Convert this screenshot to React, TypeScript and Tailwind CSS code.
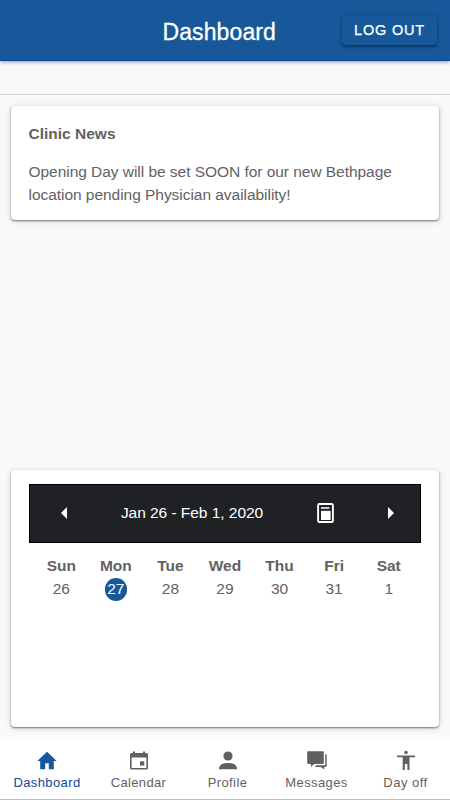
import React from 'react';

const days = [
  { name: 'Sun', date: 26 },
  { name: 'Mon', date: 27, today: true },
  { name: 'Tue', date: 28 },
  { name: 'Wed', date: 29 },
  { name: 'Thu', date: 30 },
  { name: 'Fri', date: 31 },
  { name: 'Sat', date: 1 },
];

const icons = {
  home: <path d="M10 .8.3 10h2.900v8.200h5v-6h3.600v6h5V10h2.900z" />,
  calendar: (
    <>
      <path fillRule="evenodd" d="M4 .5h2v1.500h8V.5h2V2h1.500A1.500 1.500 0 0 1 19 3.500v13.500a1.500 1.500 0 0 1-1.500 1.500h-15A1.500 1.500 0 0 1 1 17V3.500A1.500 1.500 0 0 1 2.500 2H4zM2.600 6.500v10.400h14.800V6.500z" />
      <path d="M11 10.300h4.300v4.300H11z" />
    </>
  ),
  person: (
    <>
      <circle cx="10" cy="5" r="4.600" />
      <path d="M1 18.200c0-4.700 4-6.200 9-6.200s9 1.500 9 6.200z" />
    </>
  ),
  messages: (
    <>
      <path d="M1 .3h15a.8.8 0 0 1 .8.8v11a.8.8 0 0 1-.8.8H7.200L3.900 16v-3.100H1a.8.8 0 0 1-.8-.8v-11A.8.8 0 0 1 1 .3z" />
      <path d="M18.200 3.300h.7a.8.8 0 0 1 .8.800v11a.8.800 0 0 1-.8.800h-1.700v2.500l-3.600-2.500H7.700l1.600-1.600h8.900z" />
    </>
  ),
  dayOff: (
    <>
      <circle cx="10" cy="1.500" r="1.800" />
      <path d="M1 4.500h18V6.300h-5.500V19H11.400v-6H8.800v6H6.700V6.300H1z" />
    </>
  ),
};

const tabs = [
  { label: 'Dashboard', icon: icons.home, width: 'w-[94px]', spacing: 'tracking-[0.4px]', active: true },
  { label: 'Calendar', icon: icons.calendar, width: 'w-[89px]', spacing: 'tracking-[0.35px]' },
  { label: 'Profile', icon: icons.person, width: 'w-[89px]', spacing: 'tracking-[0.4px]' },
  { label: 'Messages', icon: icons.messages, width: 'w-[89px]', spacing: 'tracking-[0.38px]' },
  { label: 'Day off', icon: icons.dayOff, width: 'w-[89px]', spacing: 'tracking-[0.5px]' },
];

const cardShadow = 'shadow-[0_1px_2px_rgba(0,0,0,0.5),0_1px_7px_rgba(0,0,0,0.14)]';

const App: React.FC = () => {
  return (
    <div className="flex flex-col w-[450px] h-[800px] overflow-hidden bg-[#f9f9f9] text-[#626262] font-['Liberation_Sans',Arial,sans-serif]">
      {/* App bar */}
      <header className="flex items-center justify-between shrink-0 h-[61px] pl-[162.5px] pr-[13px] bg-[#165899] border-b border-[#06479a] shadow-[0_1px_4px_rgba(0,0,0,0.4)]">
        <h1 className="pt-[4px] text-[23px] leading-7 tracking-[0.1px] whitespace-nowrap text-white [-webkit-text-stroke:0.3px_white]">Dashboard</h1>
        <button className="w-[95px] h-[30px] rounded bg-[#165899] text-[14.5px] leading-[30px] tracking-[0.8px] text-white shadow-[0_2px_3px_rgba(0,0,0,0.35),0_0_4px_rgba(0,0,0,0.12)] [-webkit-text-stroke:0.25px_white]">
          LOG OUT
        </button>
      </header>

      <div className="shrink-0 h-[34px] border-b border-[#d5d5d5]" />

      <main className="flex flex-col justify-between grow px-[11px] pt-[11px] pb-[12px]">
        {/* News */}
        <section className={`h-[114px] rounded bg-white pl-[17.5px] pt-[16px] ${cardShadow}`}>
          <h2 className="text-[15.5px] leading-[23px] font-bold">Clinic News</h2>
          <p className="mt-[15px] text-[15.5px] leading-[23px] tracking-[-0.04px] whitespace-nowrap">
            Opening Day will be set SOON for our new Bethpage
            <br />
            location pending Physician availability!
          </p>
        </section>

        {/* Week calendar */}
        <section className={`h-[257px] rounded bg-white pl-[17px] pr-[18px] pt-[14px] ${cardShadow}`}>
          <div className="flex items-center h-[59px] ml-px pb-[2px] border border-black bg-[#202124] text-white">
            <button className="w-[68px] flex justify-center" aria-label="Previous week">
              <svg className="w-[6px] h-[12px]" viewBox="0 0 6 12" fill="currentColor">
                <path d="M6 0v12L0 6z" />
              </svg>
            </button>
            <span className="w-[188px] text-center text-[15.5px] leading-5 tracking-[-0.04px]">Jan 26 - Feb 1, 2020</span>
            <button className="w-[79px] flex justify-center" aria-label="Pick a date">
              <svg className="w-[17px] h-[20px]" viewBox="0 0 17 20" fill="none">
                <rect x="1.1" y="1" width="14.8" height="18" rx="1.3" stroke="currentColor" strokeWidth="1.9" />
                <path d="M4 4h8.500v2H4z" fill="#c8c8c8" />
                <path d="M4 7.800h9.600V17H4z" fill="currentColor" />
              </svg>
            </button>
            <button className="w-[52px] flex justify-center" aria-label="Next week">
              <svg className="w-[6px] h-[12px]" viewBox="0 0 6 12" fill="currentColor">
                <path d="M0 0v12l6-6z" />
              </svg>
            </button>
          </div>

          <div className="grid grid-cols-7 mt-[12px] w-[382px] ml-[6px] text-center text-[15.5px]">
            {days.map((d) => (
              <div key={d.name} className="flex flex-col items-center">
                <span className="leading-[22px] font-bold">{d.name}</span>
                <span
                  className={`w-[22px] h-[23px] mt-px rounded-full leading-[21px] ${
                    d.today ? 'bg-[#165899] text-white' : ''
                  }`}
                >
                  {d.date}
                </span>
              </div>
            ))}
          </div>
        </section>
      </main>

      {/* Bottom tabs */}
      <nav className="flex shrink-0 h-[61px] bg-white border-b border-[#bac2d0]">
        {tabs.map(({ label, icon, width, spacing, active }) => (
          <button
            key={label}
            className={`flex flex-col items-center pt-[12px] ${width} ${active ? 'text-[#0d479a]' : ''}`}
          >
            <svg
              className={`w-[20px] h-[20px] overflow-visible ${active ? 'text-[#165899]' : 'text-[#606060]'}`}
              viewBox="0 0 20 20"
              fill="currentColor"
            >
              {icon}
            </svg>
            <span className={`mt-[3px] text-[13px] leading-[18px] whitespace-nowrap ${spacing}`}>{label}</span>
          </button>
        ))}
      </nav>
    </div>
  );
};

export default App;
